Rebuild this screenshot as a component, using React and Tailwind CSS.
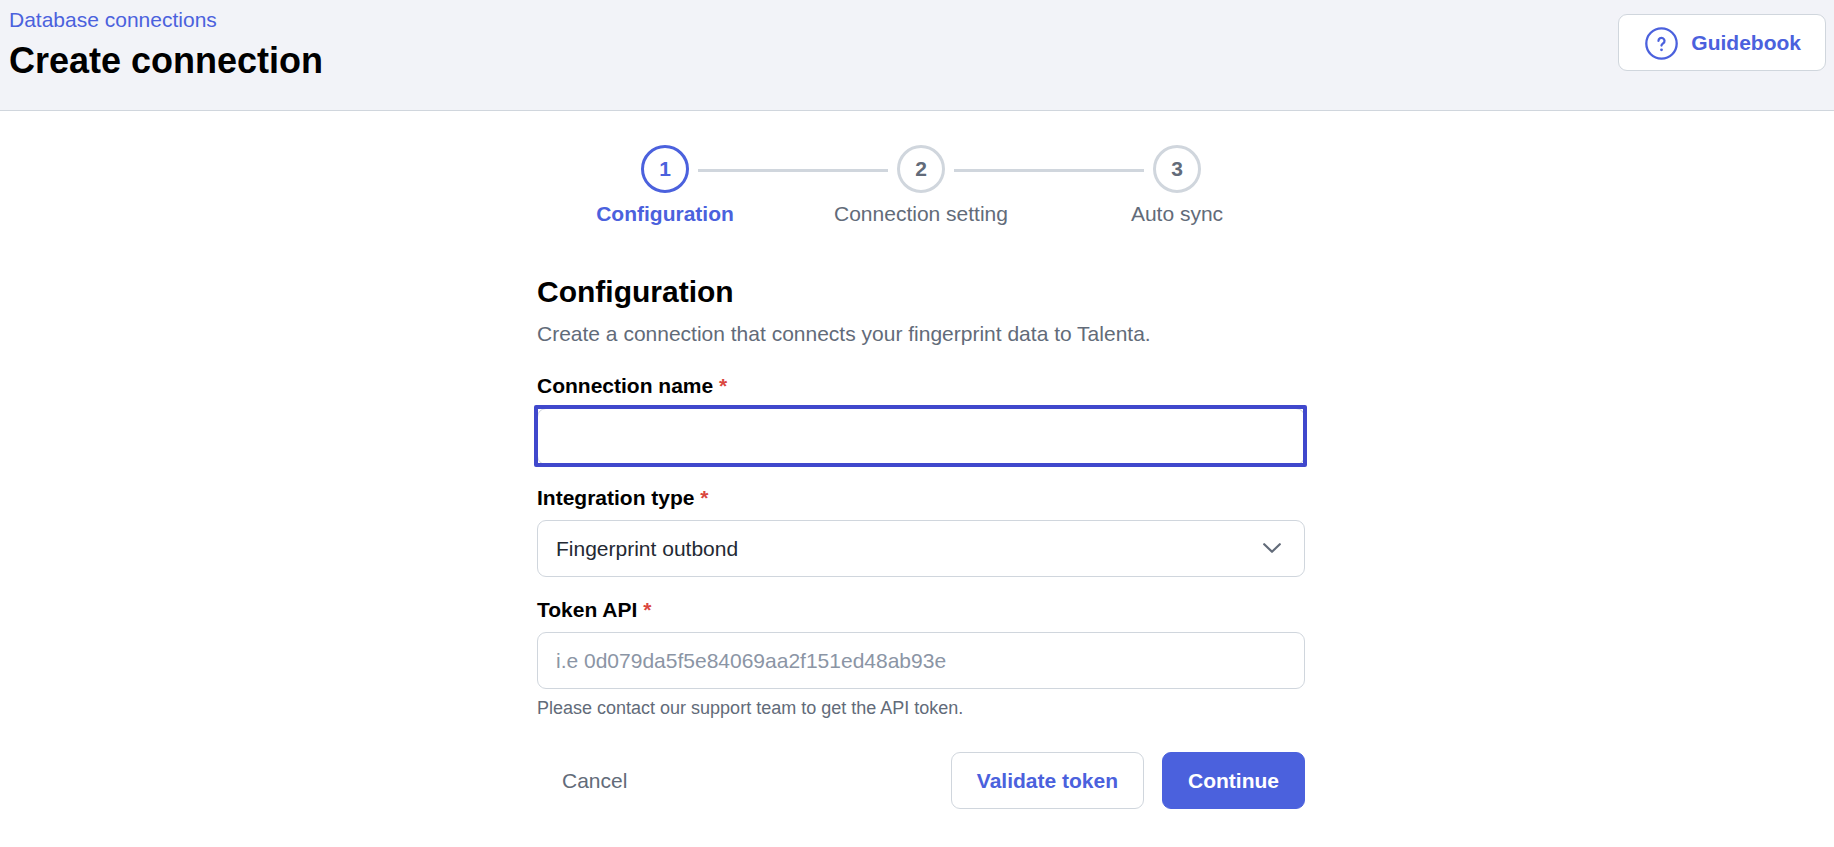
const steps = [
  { number: 1, label: "Configuration", active: true },
  { number: 2, label: "Connection setting", active: false },
  { number: 3, label: "Auto sync", active: false },
];

const fieldClass =
  "block h-[57px] w-full rounded-[9px] border border-[#d0d6dd] bg-white px-[18px] text-[21px] text-[#232933] placeholder:text-[#8b95a5] placeholder:opacity-100";

function Stepper() {
  return (
    <ol className="grid grid-cols-3">
      {steps.map((step, index) => (
        <li key={step.number} className="flex flex-col items-center">
          <div className="flex w-full items-center">
            <span
              className={
                index > 0
                  ? "mt-[3px] mr-[9px] h-[3px] flex-1 bg-[#d0d6dd]"
                  : "mr-[9px] flex-1"
              }
            />
            <span
              className={
                step.active
                  ? "flex size-12 items-center justify-center rounded-full border-3 border-[#4b61dd] font-bold text-[#4b61dd]"
                  : "flex size-12 items-center justify-center rounded-full border-3 border-[#d0d6dd] font-bold text-[#626b79]"
              }
            >
              {step.number}
            </span>
            <span
              className={
                index < steps.length - 1
                  ? "mt-[3px] ml-[9px] h-[3px] flex-1 bg-[#d0d6dd]"
                  : "ml-[9px] flex-1"
              }
            />
          </div>
          <span
            className={
              step.active
                ? "mt-[7px] font-bold text-[#4b61dd]"
                : "mt-[7px] text-[#626b79]"
            }
          >
            {step.label}
          </span>
        </li>
      ))}
    </ol>
  );
}

function Field({ id, label, children }) {
  return (
    <div className="flex flex-col gap-2">
      <label htmlFor={id} className="font-bold text-black">
        {label} <span className="text-[#da473f]">*</span>
      </label>
      {children}
    </div>
  );
}

export default function App() {
  return (
    <div className="min-h-screen bg-white font-['Liberation_Sans',Arial,sans-serif] text-[21px] leading-7">
      <header className="flex items-start justify-between border-b border-[#d0d6dd] bg-[#f2f3f8] pr-2 pb-[22px] pl-[9px]">
        <div className="pt-[6px]">
          <a href="#connections" className="block text-[#4b61dd]">
            Database connections
          </a>
          <h1 className="text-4xl leading-[54px] font-bold text-black">
            Create connection
          </h1>
        </div>
        <button
          type="button"
          className="mt-[14px] flex h-[57px] items-center gap-3 rounded-[9px] border border-[#d0d6dd] bg-white px-6 font-bold text-[#4b61dd]"
        >
          <svg
            className="size-9"
            viewBox="0 0 36 36"
            fill="none"
            stroke="currentColor"
            strokeWidth="2.3"
            strokeLinecap="round"
            aria-hidden="true"
          >
            <circle cx="18.5" cy="18.5" r="15.2" />
            <path d="M15.5 15.9a3 3 0 1 1 4.7 2.4c-1.1.8-1.7 1.2-1.7 2.3" />
            <circle cx="18.5" cy="24.8" r="1.4" fill="currentColor" stroke="none" />
          </svg>
          Guidebook
        </button>
      </header>

      <main className="pt-[34px] pb-9 pl-2">
        <div className="mx-auto max-w-3xl">
          <Stepper />

          <h2 className="mt-[43px] text-3xl leading-[42px] font-bold text-black">
            Configuration
          </h2>
          <p className="mt-[7px] text-[#626b79]">
            Create a connection that connects your fingerprint data to Talenta.
          </p>

          <form className="mt-6">
            <div className="flex flex-col gap-[19px]">
              <Field id="connection-name" label="Connection name">
                <div className="relative">
                  <input id="connection-name" type="text" className={fieldClass} />
                  <span className="pointer-events-none absolute -top-[3px] -right-[2px] -bottom-[2px] -left-[3px] rounded-xs border-4 border-[#4048cc]" />
                </div>
              </Field>

              <Field id="integration-type" label="Integration type">
                <div className="relative">
                  <select
                    id="integration-type"
                    className={`${fieldClass} appearance-none`}
                  >
                    <option>Fingerprint outbond</option>
                  </select>
                  <svg
                    className="pointer-events-none absolute top-[10px] right-[15px] size-9"
                    viewBox="0 0 36 36"
                    fill="none"
                    stroke="#626b79"
                    strokeWidth="2.2"
                    strokeLinecap="round"
                    strokeLinejoin="round"
                    aria-hidden="true"
                  >
                    <path d="M10.2 14.2l7.8 7.6 7.8-7.6" />
                  </svg>
                </div>
              </Field>

              <Field id="token-api" label="Token API">
                <input
                  id="token-api"
                  type="text"
                  placeholder="i.e 0d079da5f5e84069aa2f151ed48ab93e"
                  className={fieldClass}
                />
              </Field>
            </div>
            <p className="mt-[7px] text-lg leading-6 text-[#626b79]">
              Please contact our support team to get the API token.
            </p>

            <div className="mt-8 flex items-center justify-between">
              <button
                type="button"
                className="h-[57px] rounded-[9px] px-[25px] text-[#626b79]"
              >
                Cancel
              </button>
              <div className="flex gap-[18px]">
                <button
                  type="button"
                  className="h-[57px] rounded-[9px] border border-[#d0d6dd] bg-white px-[25px] font-bold text-[#4b61dd]"
                >
                  Validate token
                </button>
                <button
                  type="submit"
                  className="h-[57px] rounded-[9px] border border-[#4b61dd] bg-[#4b61dd] px-[25px] font-bold text-white"
                >
                  Continue
                </button>
              </div>
            </div>
          </form>
        </div>
      </main>
    </div>
  );
}
